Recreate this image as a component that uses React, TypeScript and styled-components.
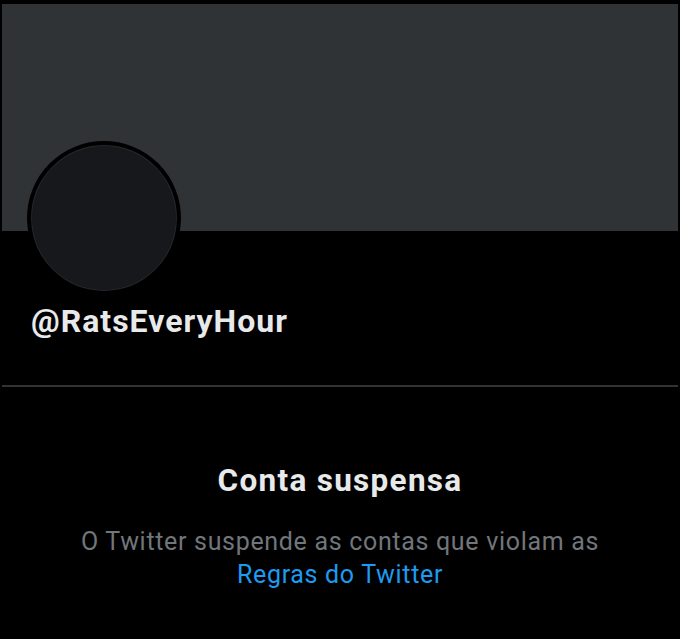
import React from "react";
import styled, { createGlobalStyle } from "styled-components";

const Global = createGlobalStyle`
  html, body { margin: 0; padding: 0; background: #000; }
  body { font-family: Roboto, "Noto Sans", "Liberation Sans", sans-serif; }
`;

const Page = styled.div`
  width: 680px;
  height: 639px;
  background: #000;
  padding: 4px 2px 0;
  box-sizing: border-box;
  display: flex;
  flex-direction: column;
`;

const Banner = styled.div`
  height: 227px;
  background: #2f3336;
`;

const Avatar = styled.div`
  width: 154px;
  height: 154px;
  box-sizing: border-box;
  margin: -90px 0 0 25px;
  border-radius: 50%;
  border: 4px solid #000;
  background: #16181c;
  box-shadow: inset 0 0 0 1px #24272b;
`;

const Handle = styled.div`
  margin: 10px 0 0 29px;
  font-size: 32px;
  line-height: 32px;
  font-weight: 700;
  letter-spacing: 1px;
  color: #e7e9ea;
`;

const Divider = styled.hr`
  margin: 48px 0 0;
  border: 0;
  height: 2px;
  background: #2f3336;
`;

const Notice = styled.div`
  display: flex;
  flex-direction: column;
  align-items: center;
  text-align: center;
  padding-top: 78px;
`;

const Title = styled.div`
  font-size: 31.5px;
  line-height: 32px;
  font-weight: 700;
  letter-spacing: 1.3px;
  color: #e7e9ea;
`;

const Body = styled.div`
  margin-top: 28px;
  font-size: 25px;
  line-height: 33px;
  letter-spacing: 0.68px;
  color: #71767b;
`;

const Link = styled.a`
  color: #1d9bf0;
  text-decoration: none;
`;

export default function App() {
  return (
    <>
      <Global />
      <Page>
        <Banner />
        <Avatar />
        <Handle>@RatsEveryHour</Handle>
        <Divider />
        <Notice>
          <Title>Conta suspensa</Title>
          <Body>
            O Twitter suspende as contas que violam as
            <br />
            <Link href="#">Regras do Twitter</Link>
          </Body>
        </Notice>
      </Page>
    </>
  );
}
